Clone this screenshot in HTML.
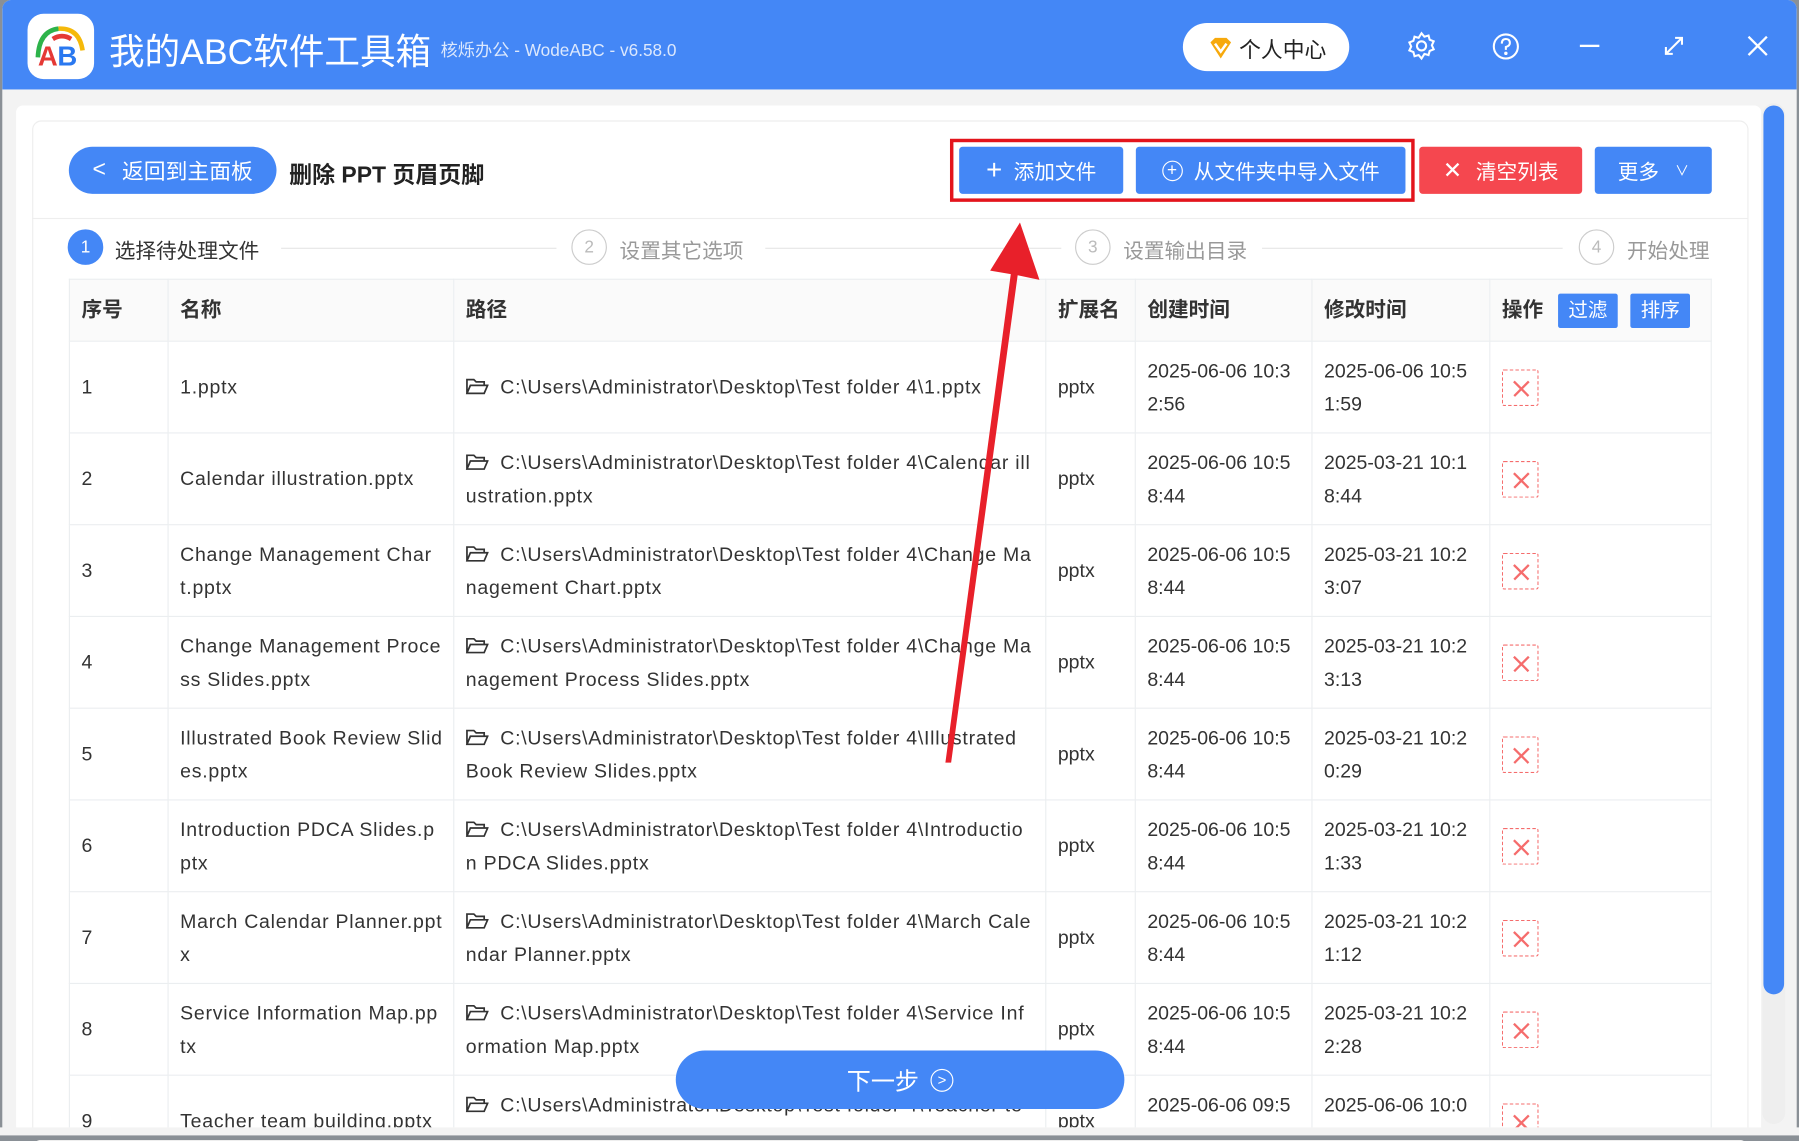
<!DOCTYPE html>
<html><head><meta charset="utf-8"><style>
*{box-sizing:border-box;margin:0;padding:0}
html,body{width:1799px;height:1140px;overflow:hidden;background:#8a9096}
#w{position:absolute;left:0;top:0;width:1568px;height:994px;transform:scale(1.14732,1.14688);transform-origin:0 0;font-family:"Liberation Sans","Noto Sans CJK SC",sans-serif;color:#333}
.a{position:absolute}
#win{left:2px;top:0;width:1564px;height:992px;background:#f3f3f3;border-radius:8px;overflow:hidden}
#tb{left:0;top:0;width:1564px;height:78px;background:#4487f6}
.btn{position:absolute;color:#fff;font-size:18px;display:flex;align-items:center;justify-content:center;border-radius:3px}
table{position:absolute;left:60px;top:243px;width:1431px;border-collapse:collapse;table-layout:fixed;font-size:17px}
td,th{border:1px solid #ebeef0;padding:0 10px;vertical-align:middle;text-align:left;line-height:29px;white-space:nowrap;overflow:hidden}
th{background:#fafafa;height:54px;font-weight:bold;font-size:18px}
td{height:80px;background:#fff}
td:nth-child(2),td:nth-child(3){letter-spacing:0.65px}
.fo{display:inline-block;width:20px;height:14px;margin-right:10px;vertical-align:-1px}
.del{display:inline-block;width:32px;height:32px;border:1px dashed #f56c6c;border-radius:2px;position:relative;vertical-align:middle}
.del:before,.del:after{content:"";position:absolute;left:7px;top:15px;width:18px;height:1.6px;background:#f56c6c;transform:rotate(45deg)}
.del:after{transform:rotate(-45deg)}
.circ{position:absolute;width:31px;height:31px;border-radius:50%;border:1px solid #ccc;color:#bbb;font-size:15px;display:flex;align-items:center;justify-content:center}
.st{position:absolute;font-size:18px;color:#999;top:205px}
.ln{position:absolute;height:1px;background:#e6e6e6;top:216px}
</style></head><body><div id="w">
<div id="win" class="a">
<div id="tb" class="a"></div>
</div>
<div class="a" style="left:24px;top:12px;width:58px;height:57px;background:#fff;border-radius:14px"></div>
<svg class="a" style="left:24px;top:12px" width="58" height="57" viewBox="0 0 58 57">
<path d="M9 38 Q10 15 27 13" stroke="#2db34a" stroke-width="4" fill="none"/>
<path d="M27 13 Q45 12 48 32" stroke="#f5b90a" stroke-width="4" fill="none"/>
<path d="M22 22 Q30 17 38 22" stroke="#e53935" stroke-width="4" fill="none"/>
<text x="9" y="45" font-family="Liberation Sans" font-weight="bold" font-size="24" fill="#e53935">A</text>
<text x="26" y="45" font-family="Liberation Sans" font-weight="bold" font-size="24" fill="#2a78f0">B</text>
</svg>
<div class="a" style="left:95px;top:20px;font-size:31px;color:#fff">我的ABC软件工具箱</div>
<div class="a" style="left:384px;top:33px;font-size:15px;color:#dce8fd">核烁办公 - WodeABC - v6.58.0</div>
<div class="a" style="left:1031px;top:20px;width:145px;height:42px;background:#fff;border-radius:21px"></div>
<svg class="a" style="left:1052px;top:30px" width="24" height="24" viewBox="0 0 24 24"><path d="M3 7 L7 3 H17 L21 7 L12 21 Z" fill="#f7a90c"/><path d="M7 8 L12 15 L17 8" stroke="#fff" stroke-width="2.2" fill="none"/></svg>
<div class="a" style="left:1080px;top:29px;font-size:19px;color:#222">个人中心</div>
<svg class="a" style="left:1226px;top:27px" width="26" height="26" viewBox="0 0 26 26" fill="none" stroke="#fff" stroke-width="1.8"><circle cx="13" cy="13" r="4"/><path d="M13 2 l2.5 3 3.6-1 1 3.6 3.5 1.4-1.6 3.5 1.6 3.5-3.5 1.4-1 3.6-3.6-1L13 24l-2.5-3-3.6 1-1-3.6-3.5-1.4L4 13.5 2.4 10l3.5-1.4 1-3.6 3.6 1z"/></svg>
<svg class="a" style="left:1300px;top:28px" width="25" height="25" viewBox="0 0 25 25" fill="none" stroke="#fff" stroke-width="1.8"><circle cx="12.5" cy="12.5" r="10.5"/><path d="M9 10 Q9 6 12.5 6 Q16 6 16 9.5 Q16 12 12.5 13 V15.5"/><circle cx="12.5" cy="18.5" r="0.6" fill="#fff"/></svg>
<div class="a" style="left:1377px;top:39px;width:17px;height:2px;background:#fff"></div>
<svg class="a" style="left:1449px;top:30px" width="20" height="20" viewBox="0 0 20 20" fill="none" stroke="#fff" stroke-width="1.8"><path d="M3 17 L17 3 M11 3 H17 V9 M3 11 V17 H9"/></svg>
<svg class="a" style="left:1522px;top:30px" width="20" height="20" viewBox="0 0 20 20" stroke="#fff" stroke-width="2"><path d="M2 2 L18 18 M18 2 L2 18"/></svg>
<div class="a" style="left:14px;top:92px;width:1521px;height:900px;background:#fff;border-radius:6px"></div>
<div class="a" style="left:28px;top:105px;width:1496px;height:890px;border:1px solid #eee;border-radius:8px;background:#fff"></div>
<div class="a" style="left:28px;top:190px;width:1496px;height:1px;background:#eee"></div>
<div class="btn" style="left:60px;top:128px;width:181px;height:41px;border-radius:21px;background:#4487f6;font-size:19px"><span style="margin-right:14px;font-size:20px">&lt;</span>返回到主面板</div>
<div class="a" style="left:252px;top:136px;font-size:20px;font-weight:bold;color:#222">删除 PPT 页眉页脚</div>
<div class="a" style="left:828px;top:121px;width:405px;height:55px;border:3px solid #e3141c"></div>
<div class="btn" style="left:836px;top:128px;width:143px;height:41px;background:#4487f6"><span style="font-size:24px;margin-right:10px;font-weight:300">+</span>添加文件</div>
<div class="btn" style="left:990px;top:128px;width:235px;height:41px;background:#4487f6"><span style="display:inline-flex;width:18px;height:18px;border:1.5px solid #fff;border-radius:50%;align-items:center;justify-content:center;font-size:15px;margin-right:10px">+</span>从文件夹中导入文件</div>
<div class="btn" style="left:1237px;top:128px;width:142px;height:41px;background:#f5474f"><span style="font-size:20px;margin-right:12px">✕</span>清空列表</div>
<div class="btn" style="left:1390px;top:128px;width:102px;height:41px;background:#4487f6">更多<span style="font-size:12px;margin-left:14px">∨</span></div>
<div class="circ" style="left:59px;top:200px;background:#4487f6;border-color:#4487f6;color:#fff">1</div>
<div class="st" style="left:100px;color:#333">选择待处理文件</div>
<div class="ln" style="left:245px;width:240px"></div>
<div class="circ" style="left:498px;top:200px">2</div>
<div class="st" style="left:540px">设置其它选项</div>
<div class="ln" style="left:667px;width:258px"></div>
<div class="circ" style="left:937px;top:200px">3</div>
<div class="st" style="left:979px">设置输出目录</div>
<div class="ln" style="left:1100px;width:262px"></div>
<div class="circ" style="left:1376px;top:200px">4</div>
<div class="st" style="left:1418px">开始处理</div>
<div class="a" style="left:0;top:0;width:1568px;height:983px;overflow:hidden">
<table>
<colgroup><col style="width:86px"><col style="width:249px"><col style="width:516px"><col style="width:78px"><col style="width:154px"><col style="width:155px"><col style="width:193px"></colgroup>
<tr><th>序号</th><th>名称</th><th>路径</th><th>扩展名</th><th>创建时间</th><th>修改时间</th><th>操作 <span style="display:inline-block;background:#4487f6;color:#fff;font-weight:normal;padding:0 9px;line-height:30px;margin-left:8px;border-radius:2px;font-size:17px">过滤</span> <span style="display:inline-block;background:#4487f6;color:#fff;font-weight:normal;padding:0 9px;line-height:30px;margin-left:6px;border-radius:2px;font-size:17px">排序</span></th></tr>
<tr><td>1</td><td>1.pptx</td><td><svg class="fo" viewBox="0 0 20 14" fill="none" stroke="#333" stroke-width="1.5"><path d="M1 13 V1 H7 L9 3 H16 V6 M1 13 L4 6 H19 L16 13 Z"/></svg>C:\Users\Administrator\Desktop\Test folder 4\1.pptx</td><td>pptx</td><td>2025-06-06 10:3<br>2:56</td><td>2025-06-06 10:5<br>1:59</td><td><span class="del"></span></td></tr>
<tr><td>2</td><td>Calendar illustration.pptx</td><td><svg class="fo" viewBox="0 0 20 14" fill="none" stroke="#333" stroke-width="1.5"><path d="M1 13 V1 H7 L9 3 H16 V6 M1 13 L4 6 H19 L16 13 Z"/></svg>C:\Users\Administrator\Desktop\Test folder 4\Calendar ill<br>ustration.pptx</td><td>pptx</td><td>2025-06-06 10:5<br>8:44</td><td>2025-03-21 10:1<br>8:44</td><td><span class="del"></span></td></tr>
<tr><td>3</td><td>Change Management Char<br>t.pptx</td><td><svg class="fo" viewBox="0 0 20 14" fill="none" stroke="#333" stroke-width="1.5"><path d="M1 13 V1 H7 L9 3 H16 V6 M1 13 L4 6 H19 L16 13 Z"/></svg>C:\Users\Administrator\Desktop\Test folder 4\Change Ma<br>nagement Chart.pptx</td><td>pptx</td><td>2025-06-06 10:5<br>8:44</td><td>2025-03-21 10:2<br>3:07</td><td><span class="del"></span></td></tr>
<tr><td>4</td><td>Change Management Proce<br>ss Slides.pptx</td><td><svg class="fo" viewBox="0 0 20 14" fill="none" stroke="#333" stroke-width="1.5"><path d="M1 13 V1 H7 L9 3 H16 V6 M1 13 L4 6 H19 L16 13 Z"/></svg>C:\Users\Administrator\Desktop\Test folder 4\Change Ma<br>nagement Process Slides.pptx</td><td>pptx</td><td>2025-06-06 10:5<br>8:44</td><td>2025-03-21 10:2<br>3:13</td><td><span class="del"></span></td></tr>
<tr><td>5</td><td>Illustrated Book Review Slid<br>es.pptx</td><td><svg class="fo" viewBox="0 0 20 14" fill="none" stroke="#333" stroke-width="1.5"><path d="M1 13 V1 H7 L9 3 H16 V6 M1 13 L4 6 H19 L16 13 Z"/></svg>C:\Users\Administrator\Desktop\Test folder 4\Illustrated<br>Book Review Slides.pptx</td><td>pptx</td><td>2025-06-06 10:5<br>8:44</td><td>2025-03-21 10:2<br>0:29</td><td><span class="del"></span></td></tr>
<tr><td>6</td><td>Introduction PDCA Slides.p<br>ptx</td><td><svg class="fo" viewBox="0 0 20 14" fill="none" stroke="#333" stroke-width="1.5"><path d="M1 13 V1 H7 L9 3 H16 V6 M1 13 L4 6 H19 L16 13 Z"/></svg>C:\Users\Administrator\Desktop\Test folder 4\Introductio<br>n PDCA Slides.pptx</td><td>pptx</td><td>2025-06-06 10:5<br>8:44</td><td>2025-03-21 10:2<br>1:33</td><td><span class="del"></span></td></tr>
<tr><td>7</td><td>March Calendar Planner.ppt<br>x</td><td><svg class="fo" viewBox="0 0 20 14" fill="none" stroke="#333" stroke-width="1.5"><path d="M1 13 V1 H7 L9 3 H16 V6 M1 13 L4 6 H19 L16 13 Z"/></svg>C:\Users\Administrator\Desktop\Test folder 4\March Cale<br>ndar Planner.pptx</td><td>pptx</td><td>2025-06-06 10:5<br>8:44</td><td>2025-03-21 10:2<br>1:12</td><td><span class="del"></span></td></tr>
<tr><td>8</td><td>Service Information Map.pp<br>tx</td><td><svg class="fo" viewBox="0 0 20 14" fill="none" stroke="#333" stroke-width="1.5"><path d="M1 13 V1 H7 L9 3 H16 V6 M1 13 L4 6 H19 L16 13 Z"/></svg>C:\Users\Administrator\Desktop\Test folder 4\Service Inf<br>ormation Map.pptx</td><td>pptx</td><td>2025-06-06 10:5<br>8:44</td><td>2025-03-21 10:2<br>2:28</td><td><span class="del"></span></td></tr>
<tr><td>9</td><td>Teacher team building.pptx</td><td><svg class="fo" viewBox="0 0 20 14" fill="none" stroke="#333" stroke-width="1.5"><path d="M1 13 V1 H7 L9 3 H16 V6 M1 13 L4 6 H19 L16 13 Z"/></svg>C:\Users\Administrator\Desktop\Test folder 4\Teacher te<br>am building.pptx</td><td>pptx</td><td>2025-06-06 09:5<br>8:44</td><td>2025-06-06 10:0<br>1:12</td><td><span class="del"></span></td></tr>
</table>
</div>
<div class="a" style="left:1536px;top:90px;width:20px;height:890px;background:#eee;border-radius:10px"></div>
<div class="a" style="left:1537px;top:92px;width:18px;height:775px;background:#4487f6;border-radius:9px"></div>
<div class="btn" style="left:589px;top:916px;width:391px;height:51px;border-radius:26px;background:#4487f6;font-size:21px">下一步<span style="display:inline-flex;width:20px;height:20px;border:1.6px solid #fff;border-radius:50%;align-items:center;justify-content:center;font-size:13px;margin-left:10px">&gt;</span></div>
<svg class="a" style="left:0;top:0" width="1568" height="994"><polygon points="824,665 829,665 887,240 906,244 889,194 863,236 881,239" fill="#e8202a"/></svg>
<div class="a" style="left:0;top:983px;width:1568px;height:11px;background:#f3f3f3"></div>
<div class="a" style="left:0;top:990px;width:1568px;height:4px;background:#8a9096"></div>
</div></body></html>
